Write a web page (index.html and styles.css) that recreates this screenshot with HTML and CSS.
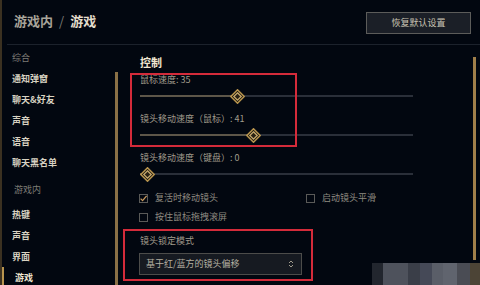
FILE: index.html
```html
<!DOCTYPE html>
<html lang="zh-CN">
<head>
<meta charset="utf-8">
<title>游戏内 / 游戏</title>
<link rel="stylesheet" href="styles.css">
</head>
<body>
<div class="app">
  <header class="header">
    <h1 class="title"><span class="crumb">游戏内</span><span class="sep">/</span><span class="cur">游戏</span></h1>
    <button class="reset">恢复默认设置</button>
  </header>
  <div class="body">
    <aside class="sidebar">
      <nav class="nav">
        <div class="nav-group">综合</div>
        <a class="nav-item">通知弹窗</a>
        <a class="nav-item">聊天&amp;好友</a>
        <a class="nav-item">声音</a>
        <a class="nav-item">语音</a>
        <a class="nav-item">聊天黑名单</a>
        <div class="nav-group nav-group-sub">游戏内</div>
        <a class="nav-item nav-item-first">热键</a>
        <a class="nav-item">声音</a>
        <a class="nav-item">界面</a>
        <a class="nav-item active">游戏</a>
      </nav>
      <div class="side-scroll"></div>
    </aside>
    <main class="content">
      <div class="panel">
        <h2 class="section">控制</h2>
        <div class="field field-first">
          <div class="label">鼠标速度: 35</div>
          <div class="slider" style="--v:35">
            <svg class="thumb" viewBox="0 0 15 15" width="15" height="15"><polygon points="7.5,0.8 14.2,7.5 7.5,14.2 0.8,7.5" fill="#1b1710" stroke="#b8944e" stroke-width="1.5"/><polygon points="7.5,3.8 11.2,7.5 7.5,11.2 3.8,7.5" fill="#2a2214" stroke="#c8aa6e" stroke-width="1.3"/></svg>
          </div>
        </div>
        <div class="field">
          <div class="label">镜头移动速度（鼠标）: 41</div>
          <div class="slider" style="--v:41">
            <svg class="thumb" viewBox="0 0 15 15" width="15" height="15"><polygon points="7.5,0.8 14.2,7.5 7.5,14.2 0.8,7.5" fill="#1b1710" stroke="#b8944e" stroke-width="1.5"/><polygon points="7.5,3.8 11.2,7.5 7.5,11.2 3.8,7.5" fill="#2a2214" stroke="#c8aa6e" stroke-width="1.3"/></svg>
          </div>
        </div>
        <div class="field">
          <div class="label">镜头移动速度（键盘）: 0</div>
          <div class="slider" style="--v:0">
            <svg class="thumb" viewBox="0 0 15 15" width="15" height="15"><polygon points="7.5,0.8 14.2,7.5 7.5,14.2 0.8,7.5" fill="#1b1710" stroke="#b8944e" stroke-width="1.5"/><polygon points="7.5,3.8 11.2,7.5 7.5,11.2 3.8,7.5" fill="#2a2214" stroke="#c8aa6e" stroke-width="1.3"/></svg>
          </div>
        </div>
        <div class="checks">
          <label class="check">
            <span class="box"><svg viewBox="0 0 9 9" width="9" height="9"><path d="M1.6 4.6 L3.6 6.6 L7.6 1.8" fill="none" stroke="#c89a5e" stroke-width="1.3"/></svg></span>
            <span class="check-text">复活时移动镜头</span>
          </label>
          <label class="check">
            <span class="box"></span>
            <span class="check-text">启动镜头平滑</span>
          </label>
          <label class="check">
            <span class="box"></span>
            <span class="check-text">按住鼠标拖拽滚屏</span>
          </label>
        </div>
        <div class="label label-select">镜头锁定模式</div>
        <div class="select">
          <span class="select-text">基于红/蓝方的镜头偏移</span>
          <svg class="select-arrows" viewBox="0 0 6 10" width="6" height="10"><path d="M1 4 L3 2 L5 4 M1 6 L3 8 L5 6" fill="none" stroke="#a09b8c" stroke-width="1"/></svg>
        </div>
      </div>
      <div class="main-scroll"></div>
      <div class="mark mark-a"></div>
      <div class="mark mark-b"></div>
    </main>
  </div>
  <div class="mosaic">
    <span class="m m1"></span><span class="m m2"></span><span class="m m3"></span><span class="m m4"></span><span class="m m5"></span><span class="m m6"></span><span class="m m7"></span><span class="m m8"></span>
  </div>
</div>
</body>
</html>
```

FILE: styles.css
```css
* { box-sizing: border-box; margin: 0; padding: 0; }

html, body {
  width: 480px;
  height: 285px;
  overflow: hidden;
  background: #020710;
}

body {
  font-family: "Noto Sans CJK SC", "Noto Sans", sans-serif;
  color: #a09b8c;
}

.app {
  position: relative;
  width: 480px;
  height: 285px;
  border-left: 2px solid #3b3121;
  display: flex;
  flex-direction: column;
  background: #020710;
}

.header {
  height: 45px;
  flex: none;
  margin-left: 5px;
  padding-left: 7px;
  padding-right: 9px;
  border-bottom: 1px solid #1c222c;
  display: flex;
  align-items: center;
  justify-content: space-between;
}

.title {
  font-size: 13px;
  font-weight: 700;
  line-height: 16px;
  display: flex;
  align-items: center;
  margin-top: -2px;
}

.crumb { color: #a8a49a; }
.sep { color: #7c7a74; font-weight: 400; margin: 0 6px; }
.cur { color: #e4ddcc; }

.reset {
  width: 105px;
  height: 22px;
  margin-top: 1px;
  background: #1b1f27;
  border: 1px solid #5c5c5a;
  color: #c9c3b3;
  font-family: inherit;
  font-size: 9px;
  line-height: 20px;
}

.body {
  flex: 1;
  display: flex;
  min-height: 0;
}

.sidebar {
  width: 116px;
  flex: none;
  display: flex;
}

.nav {
  flex: 1;
  padding-top: 2px;
  display: flex;
  flex-direction: column;
  overflow: hidden;
}

.nav-group,
.nav-item {
  height: 21px;
  line-height: 21px;
  font-size: 9px;
  padding-left: 10px;
  white-space: nowrap;
}

.nav-group {
  color: #7e7c76;
}

.nav-group-sub {
  margin-top: 6px;
  padding-left: 12px;
}

.nav-item {
  color: #d8d2c2;
  font-weight: 700;
}

.nav-item-first { margin-top: 4px; }

.nav-item.active {
  border-left: 2px solid #b8944e;
  padding-left: 11px;
  color: #f0e6d2;
}

.side-scroll {
  width: 3px;
  margin-top: 27px;
  background: #8a7046;
}

.content {
  position: relative;
  flex: 1;
  display: flex;
}

.panel {
  flex: 1;
  padding: 10px 60px 0 22px;
  display: flex;
  flex-direction: column;
}

.section {
  font-size: 11px;
  font-weight: 700;
  line-height: 14px;
  color: #f0e6d2;
}

.field { margin-top: 9px; }
.field-first { margin-top: 5px; }

.label {
  font-size: 9px;
  line-height: 12px;
  color: #a09b8c;
  white-space: nowrap;
}

.slider {
  position: relative;
  height: 16px;
  margin-top: 2px;
  width: 273px;
}

.slider::before {
  content: "";
  position: absolute;
  left: 0;
  right: 0;
  top: 7px;
  height: 2px;
  background: #2a2f39;
}

.slider::after {
  content: "";
  position: absolute;
  left: 0;
  top: 7px;
  height: 2px;
  width: calc(7.5px + var(--v) * (100% - 15px) / 100);
  background: #5d5649;
}

.thumb {
  position: absolute;
  top: 0.5px;
  left: calc(var(--v) * (100% - 15px) / 100);
  z-index: 1;
  display: block;
}

.checks {
  margin-top: 9px;
  margin-left: -1px;
  display: grid;
  grid-template-columns: 167px auto;
  row-gap: 5px;
}

.check {
  display: flex;
  align-items: center;
  height: 14px;
}

.box {
  width: 9px;
  height: 9px;
  border: 1px solid #5a5a58;
  flex: none;
  position: relative;
}

.box svg {
  position: absolute;
  left: -1px;
  top: -1px;
  display: block;
}

.check-text {
  margin-left: 7px;
  font-size: 9px;
  line-height: 12px;
  color: #8f8b81;
  white-space: nowrap;
}

.label-select { margin-top: 11px; }

.select {
  margin-top: 6px;
  margin-left: -1px;
  width: 163px;
  height: 22px;
  border: 1px solid #4c4c4a;
  background: #161a21;
  display: flex;
  align-items: center;
  justify-content: space-between;
  padding: 0 7px 0 6px;
}

.select-text {
  font-size: 9px;
  line-height: 12px;
  color: #b5b0a2;
  white-space: nowrap;
}

.select-arrows { display: block; }

.main-scroll {
  width: 3px;
  flex: none;
  margin: 12px 4px 0 0;
  height: 203px;
  background: #a07f4a;
}

.mark {
  position: absolute;
  border: 2px solid #d42b3a;
  pointer-events: none;
}

.mark-a {
  left: 12px;
  top: 28px;
  width: 167px;
  height: 74px;
}

.mark-b {
  left: 5px;
  top: 184px;
  width: 190px;
  height: 52px;
}

.mosaic {
  position: absolute;
  left: 370px;
  top: 263px;
  width: 108px;
  height: 22px;
  display: flex;
}

.m { height: 100%; display: block; }
.m1 { width: 11px; background: #22262e; }
.m2 { width: 25px; background: #4e525c; }
.m3 { width: 12px; background: #3a3e48; }
.m4 { width: 12px; background: #454957; }
.m5 { width: 11px; background: #5a5e68; }
.m6 { width: 14px; background: #60646e; }
.m7 { width: 13px; background: #4a4c54; }
.m8 { width: 10px; background: #4c4436; }
```
